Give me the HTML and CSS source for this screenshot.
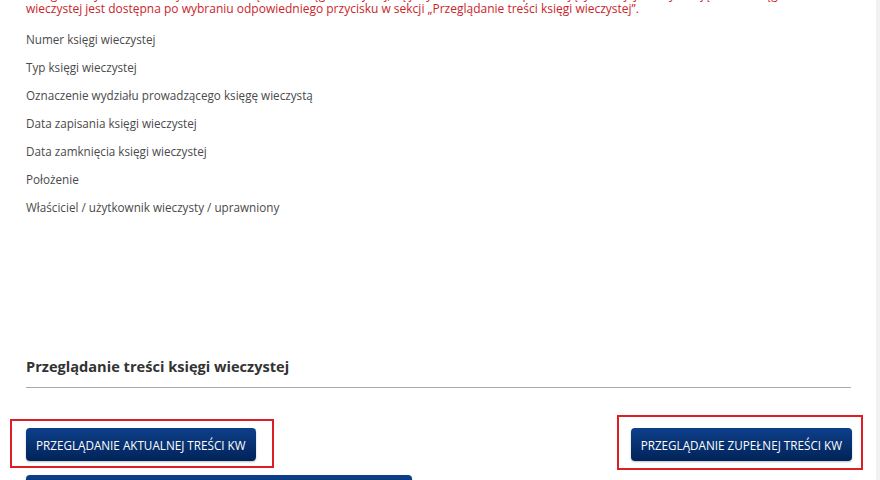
FILE: index.html
```html
<!DOCTYPE html>
<html lang="pl">
<head>
<meta charset="utf-8">
<title>Księga wieczysta</title>
<link rel="stylesheet" href="styles.css">
</head>
<body>
<div class="page">
  <main class="content">
    <p class="notice">Uwaga! Powyższe informacje nie stanowią treści księgi wieczystej, są jedynie elementami pozwalającymi na jej identyfikację. Treść księgi wieczystej jest dostępna po wybraniu odpowiedniego przycisku w sekcji „Przeglądanie treści księgi wieczystej”.</p>
    <ul class="fields">
      <li>Numer księgi wieczystej</li>
      <li>Typ księgi wieczystej</li>
      <li>Oznaczenie wydziału prowadzącego księgę wieczystą</li>
      <li>Data zapisania księgi wieczystej</li>
      <li>Data zamknięcia księgi wieczystej</li>
      <li>Położenie</li>
      <li>Właściciel / użytkownik wieczysty / uprawniony</li>
    </ul>
    <section class="browse">
      <h2 class="browse-title">Przeglądanie treści księgi wieczystej</h2>
      <div class="btn-row">
        <div class="btn-wrap">
          <button class="btn" type="button">PRZEGLĄDANIE AKTUALNEJ TREŚCI KW</button>
          <span class="mark mark-left"></span>
        </div>
        <div class="btn-wrap">
          <button class="btn" type="button">PRZEGLĄDANIE ZUPEŁNEJ TREŚCI KW</button>
          <span class="mark mark-right"></span>
        </div>
      </div>
      <button class="btn btn-wide" type="button">&nbsp;</button>
    </section>
  </main>
  <div class="side-strip"></div>
</div>
</body>
</html>
```
FILE: styles.css
```css
html, body {
  margin: 0;
  padding: 0;
  background: #ffffff;
  overflow: hidden;
  height: 480px;
}
body {
  font-family: "Open Sans", "Liberation Sans", sans-serif;
  color: #444;
}
.page {
  display: flex;
  height: 480px;
  overflow: hidden;
}
.content {
  flex: 1;
  padding: 0 0 0 26px;
  width: 826px;
  max-width: 826px;
}
.side-strip {
  width: 4px;
  margin-left: auto;
  background: #f1f1f1;
}
.notice {
  margin: -12px 0 0 0;
  width: 800px;
  font-size: 12px;
  line-height: 14px;
  color: #c9252b;
}
.fields {
  list-style: none;
  margin: 9px 0 0 0;
  padding: 0;
}
.fields li {
  font-size: 11.7px;
  line-height: 28px;
  color: #4a4a4a;
}
.browse {
  margin-top: 135px;
}
.browse-title {
  margin: 0;
  font-size: 14.6px;
  font-weight: 700;
  line-height: 20px;
  color: #333;
  padding-bottom: 11px;
  border-bottom: 1px solid #a9a9a9;
  width: 825px;
}
.btn-row {
  display: flex;
  justify-content: space-between;
  margin-top: 40px;
  width: 826px;
}
.btn-wrap {
  position: relative;
}
.btn {
  display: block;
  height: 33px;
  padding: 0 10px;
  border: 0;
  border-radius: 4px;
  background: linear-gradient(to bottom, #0d3f8a 0%, #07306f 55%, #002458 100%);
  color: #ffffff;
  font-family: "Open Sans", "Liberation Sans", sans-serif;
  font-size: 11.7px;
  letter-spacing: 0;
  box-shadow: 0 1px 2px rgba(0, 0, 0, 0.25);
}
.mark {
  position: absolute;
  border: 2px solid #dc1f26;
  pointer-events: none;
}
.mark-left {
  left: -16px;
  right: -18px;
  top: -9px;
  bottom: -7px;
}
.mark-right {
  left: -14px;
  right: -11px;
  top: -13px;
  bottom: -9px;
}
.btn-wide {
  margin-top: 14px;
  width: 386px;
}
```
